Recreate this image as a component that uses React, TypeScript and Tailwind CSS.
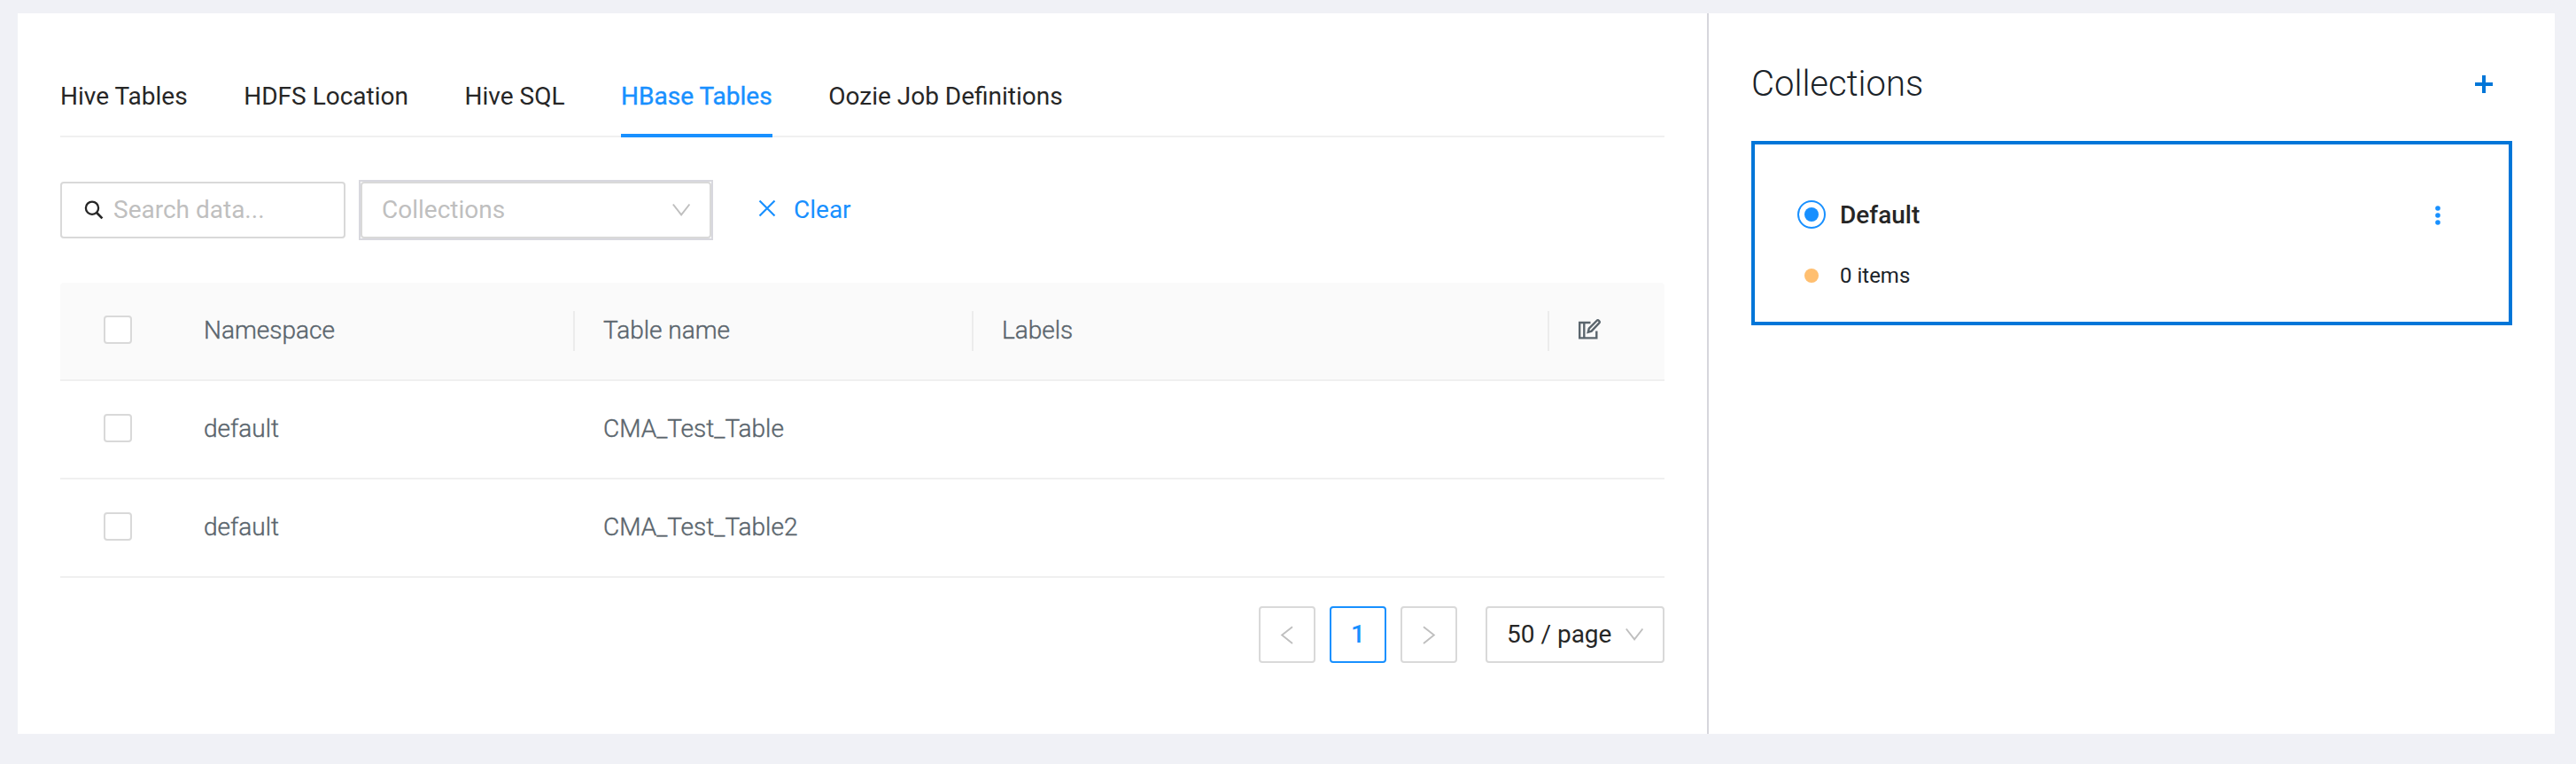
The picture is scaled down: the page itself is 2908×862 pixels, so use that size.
import React from "react";

const TABS = ["Hive Tables", "HDFS Location", "Hive SQL", "HBase Tables", "Oozie Job Definitions"];
const ACTIVE_TAB = "HBase Tables";

const ROWS = [
  { namespace: "default", table: "CMA_Test_Table" },
  { namespace: "default", table: "CMA_Test_Table2" },
];

function Chevron({ className, d }: { className: string; d: string }) {
  return (
    <svg className={className} viewBox="0 0 28 28" fill="none" stroke="currentColor" strokeWidth="1.9">
      <path d={d} />
    </svg>
  );
}

const DOWN = "M4.8 7.5 L14.1 19.4 L23.4 7.5";
const LEFT = "M20 5.2 L8.2 14.6 L20 24";
const RIGHT = "M8 5.2 L19.8 14.6 L8 24";

function Checkbox() {
  return <span className="block h-8 w-8 rounded-[4px] border-2 border-[#d9d9d9] bg-white" />;
}

function Tabs() {
  return (
    <nav className="flex h-[94px] gap-[63.6px] border-b-2 border-[#f0f0f0]">
      {TABS.map((tab) => (
        <button
          key={tab}
          className={
            tab === ACTIVE_TAB
              ? "-mb-0.5 flex h-[94px] items-center border-b-4 border-[#1890ff] pt-1.5 text-[#1890ff] [-webkit-text-stroke:0.4px_#1890ff]"
              : "flex h-[92px] items-center pt-1"
          }
        >
          {tab}
        </button>
      ))}
    </nav>
  );
}

function Filters() {
  return (
    <div className="mt-12 flex h-[68px] items-center">
      <div className="flex h-16 w-[322px] items-center rounded-[4px] border-2 border-[#d9d9d9] pl-6">
        <svg className="h-7 w-7" viewBox="0 0 28 28" fill="none" stroke="#262626" strokeWidth="2.3">
          <circle cx="10" cy="11.7" r="7.1" />
          <path d="M14.9 16.7 L21.4 23.4" strokeWidth="2.7" />
        </svg>
        <span className="ml-1.5 text-[#bfbfbf]">Search data...</span>
      </div>
      <div className="ml-[15px] h-[68px] w-[400px] border-2 border-[#d8d8de]">
        <div className="flex h-16 items-center justify-between rounded-[4px] border-2 border-[#d9d9d9] pr-[18px] pl-[22px] text-[#bfbfbf]">
          <span>Collections</span>
          <Chevron className="h-7 w-7" d={DOWN} />
        </div>
      </div>
      <button className="ml-[47px] flex items-center text-[#1890ff]">
        <svg className="h-7 w-7" viewBox="0 0 28 28" fill="none" stroke="currentColor" strokeWidth="2.2">
          <path d="M5.5 3.5 L22.5 20.5 M22.5 3.5 L5.5 20.5" />
        </svg>
        <span className="ml-4">Clear</span>
      </button>
    </div>
  );
}

function HeaderCell({ label }: { label: string }) {
  return (
    <div className="flex items-center justify-between pl-8">
      <span className="pt-0.5">{label}</span>
      <span className="mt-0.5 h-[45px] w-0.5 bg-[#ececec]" />
    </div>
  );
}

function EditColumnsIcon() {
  return (
    <svg className="h-7 w-7" viewBox="0 0 28 28" fill="none" stroke="#5a656d" strokeWidth="2.4">
      <path d="M14.5 6 H2.2 V23.4 H21.3 V15.5" />
      <path d="M7.3 6 V23.4" />
      <path d="M11.8 16.8 L12.8 12.6 L21.4 4 a1.8 1.8 0 0 1 2.7 2.7 L15.6 15.6 Z" />
    </svg>
  );
}

function DataTable() {
  return (
    <div className="mt-12 font-light text-[#5a656d] [-webkit-text-stroke:0.4px_#5a656d]">
      <div className="grid h-[111px] grid-cols-[130px_451px_450px_650px_130px] rounded-t-[4px] border-b-2 border-[#f0f0f0] bg-[#fafafa] pb-[3px]">
        <div className="flex items-center pl-[49px]">
          <Checkbox />
        </div>
        <HeaderCell label="Namespace" />
        <HeaderCell label="Table name" />
        <HeaderCell label="Labels" />
        <div className="flex items-center pl-8">
          <EditColumnsIcon />
        </div>
      </div>
      {ROWS.map((row) => (
        <div
          key={row.table}
          className="grid h-[111px] grid-cols-[130px_451px_450px_650px_130px] items-center border-b-2 border-[#f0f0f0] pb-[3px]"
        >
          <div className="pl-[49px]">
            <Checkbox />
          </div>
          <span className="pt-0.5 pl-8">{row.namespace}</span>
          <span className="pt-0.5 pl-8">{row.table}</span>
        </div>
      ))}
    </div>
  );
}

function Pagination() {
  return (
    <div className="mt-8 flex justify-end gap-4">
      <button className="flex h-16 w-16 items-center justify-center rounded-[4px] border-2 border-[#d9d9d9] text-[#bfbfbf]">
        <Chevron className="h-7 w-7" d={LEFT} />
      </button>
      <button className="flex h-16 w-16 items-center justify-center rounded-[4px] border-2 border-[#1890ff] font-medium text-[#1890ff]">
        1
      </button>
      <button className="flex h-16 w-16 items-center justify-center rounded-[4px] border-2 border-[#d9d9d9] text-[#bfbfbf]">
        <Chevron className="h-7 w-7" d={RIGHT} />
      </button>
      <button className="ml-4 flex h-16 w-[202px] items-center justify-between rounded-[4px] border-2 border-[#d9d9d9] pr-[18px] pl-[22px]">
        <span>50 / page</span>
        <Chevron className="h-7 w-7 text-[#bfbfbf]" d={DOWN} />
      </button>
    </div>
  );
}

function CollectionsPanel() {
  return (
    <aside className="flex-1 pr-12 pl-12 pt-[52px]">
      <div className="flex h-14 items-center justify-between pr-[18px]">
        <h2 className="text-[40px] leading-[56px] font-light text-[#1b2329]">Collections</h2>
        <svg className="h-7 w-7" viewBox="0 0 28 28" fill="none" stroke="#0076d8" strokeWidth="4">
          <path d="M4 14 H24 M14 4 V24" />
        </svg>
      </div>
      <div className="mt-9 h-[208px] border-4 border-[#0076d8] pt-[63px] pr-[66px] pl-12">
        <div className="flex h-8 items-center">
          <span className="flex h-8 w-8 items-center justify-center rounded-full border-2 border-[#1890ff]">
            <span className="h-4 w-4 rounded-full bg-[#1890ff]" />
          </span>
          <span className="ml-4 flex-1 pt-0.5 font-medium">Default</span>
          <svg className="h-7 w-7" viewBox="0 0 28 28" fill="#1890ff">
            <circle cx="14" cy="7" r="2.8" />
            <circle cx="14" cy="15" r="2.8" />
            <circle cx="14" cy="23" r="2.8" />
          </svg>
        </div>
        <div className="mt-[35px] flex h-9 items-center pl-2">
          <span className="h-4 w-4 rounded-full bg-[#ffbf70]" />
          <span className="ml-6 text-2xl text-[#1b2329]">0 items</span>
        </div>
      </div>
    </aside>
  );
}

export default function App() {
  return (
    <div className="h-[862px] w-[2908px] bg-[#f0f1f6] pt-[15px] pl-5 font-[Roboto,sans-serif] text-[28px] leading-[44px] text-[#262626]">
      <div className="flex h-[813px] w-[2864px] bg-white">
        <main className="w-[1909px] border-r-2 border-[#d6d6dc] pt-[46px] pr-12 pl-12">
          <Tabs />
          <Filters />
          <DataTable />
          <Pagination />
        </main>
        <CollectionsPanel />
      </div>
    </div>
  );
}
